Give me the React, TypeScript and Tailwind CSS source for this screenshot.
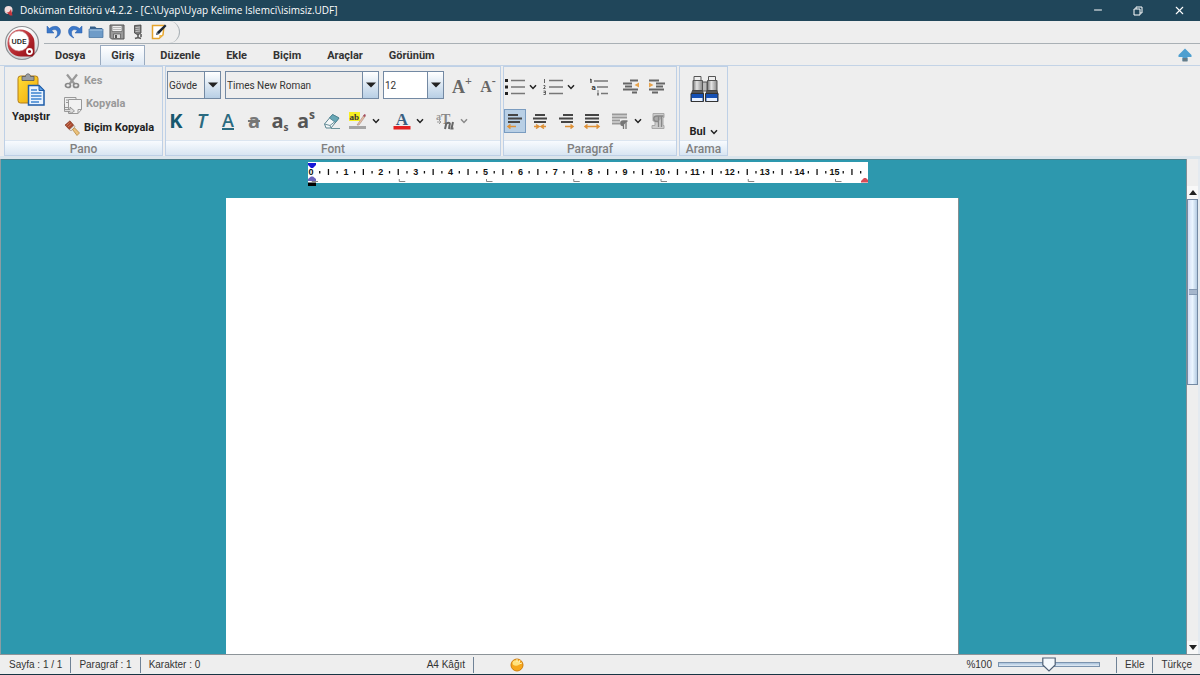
import { useState, type ReactNode } from "react";
import { Minus, X } from "lucide-react";
import clsx from "clsx";

const tabs = ["Dosya", "Giriş", "Düzenle", "Ekle", "Biçim", "Araçlar", "Görünüm"];

function Chevron({ muted = false }: { muted?: boolean }) {
  return (
    <svg viewBox="0 0 8 6" className={clsx("h-1.5 w-2", muted ? "text-[#8a8a8a]" : "text-[#222]")}>
      <path d="M1 1.2 4 4.4 7 1.2" fill="none" stroke="currentColor" strokeWidth="1.5" />
    </svg>
  );
}

function IconButton({ label, children, className }: { label: string; children: ReactNode; className?: string }) {
  return (
    <button type="button" aria-label={label} className={clsx("flex h-6 w-5 shrink-0 justify-center", className ?? "items-center")}>
      {children}
    </button>
  );
}

function SplitButton({ label, children, muted, className }: { label: string; children: ReactNode; muted?: boolean; className?: string }) {
  return (
    <button type="button" aria-label={label} className={clsx("flex h-6 shrink-0 items-center gap-1", className)}>
      <span className="flex w-5 items-center justify-center">{children}</span>
      <Chevron muted={muted} />
    </button>
  );
}

function Combo({ label, options, className, white }: { label: string; options: string[]; className: string; white?: boolean }) {
  return (
    <div className={clsx("relative h-7", className)}>
      <select
        aria-label={label}
        className={clsx(
          "h-full w-full appearance-none border border-[#7389a3] pr-4 pl-px text-[10px] text-[#333] outline-none",
          white ? "bg-white" : "bg-[#eeeeee]"
        )}
      >
        {options.map((o) => (
          <option key={o}>{o}</option>
        ))}
      </select>
      <span className="pointer-events-none absolute inset-y-px right-px flex w-4 items-center justify-center border-l border-[#7389a3] bg-linear-to-b from-white to-[#b8cfe5]">
        <svg viewBox="0 0 10 6" className="h-1.5 w-2.5">
          <path d="M0 .5h10L5 5.5z" fill="#222" />
        </svg>
      </span>
    </div>
  );
}

function Group({ title, children, className }: { title: string; children: ReactNode; className: string }) {
  return (
    <section aria-label={title} className={clsx("flex flex-col border border-[#bed0e6] bg-[#eeeeee]", className)}>
      <div className="h-[73px]">{children}</div>
      <h2 className="h-[15px] border-t border-[#dbe5f0] bg-linear-to-b from-[#f8fbfe] to-[#d9e6f2] text-center text-xs leading-4 font-medium text-[#808080]">
        {title}
      </h2>
    </section>
  );
}

function Logo() {
  return (
    <svg viewBox="0 0 36 36" className="size-9">
      <defs>
        <linearGradient id="ring" x1="0" y1="0" x2="0" y2="1">
          <stop offset="0" stopColor="#fff" />
          <stop offset="1" stopColor="#cbd0d4" />
        </linearGradient>
        <linearGradient id="red" x1="0" y1="0" x2="1" y2="1">
          <stop offset="0" stopColor="#d9656a" />
          <stop offset=".6" stopColor="#b3242b" />
          <stop offset="1" stopColor="#8e1118" />
        </linearGradient>
      </defs>
      <circle cx="18" cy="18" r="16.5" fill="url(#ring)" stroke="#8d9094" strokeWidth="1.2" />
      <path d="M16 4.500A12.500 13.500 0 0 0 3.500 18C3.500 26 9 31.500 17 31.500H28.500L30.500 29V18A14 13.500 0 0 0 16 4.500Z" fill="url(#red)" />
      <circle cx="15" cy="16" r="10" fill="#fff" stroke="#d4a6a8" strokeWidth=".6" />
      <circle cx="25.500" cy="26.500" r="2.500" fill="#8e1118" stroke="#fff" strokeWidth="1.800" />
      <text x="15" y="19" textAnchor="middle" fontSize="8" fill="#222" className="font-medium">UDE</text>
    </svg>
  );
}

function Undo({ flip = false }: { flip?: boolean }) {
  return (
    <svg viewBox="0 0 16 16" className={clsx("size-4", flip && "-scale-x-100")}>
      <path d="M1 2v7h7L5.700 6.500C9 4.500 11.500 6 11.500 9c0 2-1 3.500-2.500 5 4-1.500 5.500-4 5.500-6.500 0-5-6-7-11-3z" fill="#3b78c9" stroke="#2a5fab" strokeWidth=".5" />
    </svg>
  );
}

function QuickIcons() {
  return (
    <>
      <IconButton label="Geri al"><Undo /></IconButton>
      <IconButton label="Yinele"><Undo flip /></IconButton>
      <IconButton label="Aç">
        <svg viewBox="0 0 16 14" className="h-3.5 w-4">
          <path d="M2 1.500h5L8.500 3H14v9H2z" fill="#345e88" />
          <path d="M1 4h14v8.500H1z" fill="#6f9cc8" stroke="#3f6e9d" strokeWidth=".7" />
          <path d="M1.500 5h13" stroke="#a9c9e6" />
        </svg>
      </IconButton>
      <IconButton label="Kaydet">
        <svg viewBox="0 0 16 16" className="size-4">
          <path d="M1 1h14v14H2.500L1 13.500z" fill="#999" stroke="#555" />
          <path d="M3 1.500h10v6H3z" fill="#eee" stroke="#666" strokeWidth=".7" />
          <path d="M4.500 10h7v4.500h-7z" fill="#ddd" stroke="#555" strokeWidth=".7" />
          <path d="M6 11h2v3H6z" fill="#555" />
          <path d="M4 3.500h8M4 5.500h8" stroke="#aaa" strokeWidth=".8" />
        </svg>
      </IconButton>
      <IconButton label="İmzala">
        <svg viewBox="0 0 12 16" className="h-4 w-3">
          <path d="M2.500 1.500 9 1v8l-3 2-3.500-2z" fill="#777" stroke="#444" strokeWidth=".8" />
          <path d="M3.500 3.500 8 3M3.500 5.500 8 5M3.500 7.500 8 7" stroke="#ddd" strokeWidth=".8" />
          <path d="M6 10v4M3 14.500c2-1 4-1 6 0M9 10v3" stroke="#555" strokeWidth="1.500" fill="none" />
        </svg>
      </IconButton>
      <IconButton label="Düzenle">
        <svg viewBox="0 0 16 16" className="size-4">
          <path d="M1.500 1.500H13L12 11l-4 3.500H1.500z" fill="#fff" stroke="#e6a42c" strokeWidth="1.500" />
          <path d="M8 14.500 8.500 11H12z" fill="#f0b94b" />
          <path d="m5 11 1-3 8-7.500 1.500 1.500-7.500 8z" fill="#1c2736" />
          <path d="m5 11 1-3 2 2z" fill="#6a7787" />
        </svg>
      </IconButton>
    </>
  );
}

function PasteIcon() {
  return (
    <svg viewBox="0 0 30 34" className="h-[34px] w-[30px] shrink-0">
      <defs>
        <linearGradient id="board" x1="0" y1="0" x2="1" y2="1">
          <stop offset="0" stopColor="#ffdf35" />
          <stop offset="1" stopColor="#f0a80c" />
        </linearGradient>
      </defs>
      <rect x="2" y="3" width="20" height="27" rx="2.500" fill="url(#board)" stroke="#b37d18" />
      <path d="M6 7.500V3.500h3.500C9.500 0 14.500 0 14.500 3.500H18v4z" fill="#999da2" stroke="#555" strokeWidth=".8" />
      <path d="M12.500 12.500H23l5 5V32H12.500z" fill="#e9f3ff" stroke="#1c5ca9" strokeWidth="1.500" />
      <path d="M23 12.500v5h5z" fill="#5f9ee2" stroke="#1c5ca9" />
      <path d="M15 17h6M15 20h10.500M15 23h10.500M15 26h10.500M15 29h8" stroke="#3e84d0" strokeWidth="1.300" />
    </svg>
  );
}

function CutIcon() {
  return (
    <svg viewBox="0 0 16 16" className="size-4">
      <path d="M3 1.500 10.500 11M13 1.500 5.500 11" stroke="#999" strokeWidth="2.200" />
      <ellipse cx="4" cy="12.500" rx="2.500" ry="2" fill="none" stroke="#888" strokeWidth="1.700" />
      <ellipse cx="12" cy="12.500" rx="2.500" ry="2" fill="none" stroke="#888" strokeWidth="1.700" />
    </svg>
  );
}

function CopyIcon() {
  return (
    <svg viewBox="0 0 18 18" className="size-[18px]">
      <path d="M.5 1.500H12v10H.5z" fill="#eee" stroke="#999" />
      <path d="M4.500 3.500h13v10L14 17.500H4.500z" fill="#f2f2f2" stroke="#999" />
      <path d="M17.500 13.500H14v4M2 4h2M2 6.500h2" stroke="#999" fill="none" />
      <path d="M.5 8v5.500H6V11l4.500 4L6 18v-2.500H.5z" fill="#ddd" stroke="#888" strokeWidth=".8" />
    </svg>
  );
}

function BrushIcon() {
  return (
    <svg viewBox="0 0 16 16" className="size-4">
      <path d="M1 5 6 .8l4 4.700-4.500 4.300z" fill="#a8482f" stroke="#79301d" strokeWidth=".6" />
      <path d="m2.500 5.500 3.200-3M4 7l3.500-3" stroke="#d58a68" strokeWidth=".8" />
      <path d="m5.500 9.500 4.300-4 1.400 1.500L7 11z" fill="#e8e3da" stroke="#88796a" strokeWidth=".5" />
      <path d="m8.500 9.500 2-1.700L15.500 13l-2.500 2.500z" fill="#ecc27c" stroke="#ae7e35" strokeWidth=".7" />
    </svg>
  );
}

function EraserIcon() {
  return (
    <svg viewBox="0 0 18 18" className="size-[18px] shrink-0">
      <path d="M1.500 12 9.500 2.500l6.500 3.500L8 16H3z" fill="#f4f7f8" stroke="#5b8591" />
      <path d="m6.500 6 3-3.500L16 6l-3.500 4.500z" fill="#68a7b6" stroke="#477f8e" strokeWidth=".8" />
      <path d="M1.500 12 7 13.500l1 2.500M7 13.500l5-4M8 16.500h9" stroke="#6c929b" fill="none" />
    </svg>
  );
}

function HighlightIcon() {
  return (
    <svg viewBox="0 0 20 20" className="size-5">
      <path d="M1 1h11v9H1z" fill="#f7ef21" />
      <text x="1.500" y="9" fontSize="9" fill="#333" className="font-[Liberation_Serif] font-bold">ab</text>
      <path d="m9 14 7-10 1.500 1L11 14z" fill="#e8bda4" stroke="#a78a7a" strokeWidth=".6" />
      <path d="m15 5 1.500-2 1.500 1-1.500 2z" fill="#a54d60" />
      <path d="M1 15h17v3H1z" fill="#a5a5a5" />
    </svg>
  );
}

function FontColorIcon() {
  return (
    <svg viewBox="0 0 20 20" className="size-5 overflow-visible">
      <text x="10" y="13.500" textAnchor="middle" fontSize="17" fill="#3a5f82" className="font-[Liberation_Serif] font-bold">A</text>
      <path d="M1.500 15h17v3.500h-17z" fill="#e32020" />
    </svg>
  );
}

function TextEffectIcon() {
  return (
    <svg viewBox="0 0 20 20" className="size-5">
      <g className="font-[Liberation_Serif] font-bold">
        <text x="0" y="9" fontSize="10" fill="#999">a</text>
        <text x="5" y="13" fontSize="14" fill="#888">T</text>
      </g>
      <path d="M10.500 11.500 9 18M10.500 12.500c3-2 4 0 3 2L13 18M17 11l-1.500 6.500h2" fill="none" stroke="#666" strokeWidth="2" />
      <path d="M1 11h4M3 9l2 2-2 2" fill="none" stroke="#999" />
    </svg>
  );
}

// Bulleted and numbered lists share the same three rules
function ListIcon({ numbered = false }: { numbered?: boolean }) {
  return (
    <svg viewBox="0 0 20 16" className="h-4 w-5">
      <path d="M6 1.500h14M6 8h14M6 14.500h14" stroke="#777" strokeWidth="1.300" />
      {numbered ? (
        <path d="M1.500 0v4M.5 6.500h1.500V8L.5 9.500H2.500M.5 12h2v3.500h-2M.5 13.500h2" stroke="#555" strokeWidth=".9" fill="none" />
      ) : (
        <path d="M0 0h3v3H0zM0 6.500h3v3H0zM0 13h3v3H0z" fill="#222" />
      )}
    </svg>
  );
}

function MultiLevelIcon() {
  return (
    <svg viewBox="0 0 20 18" className="h-[18px] w-5">
      <path d="M5 3h14M8 9h11M12 15.500h7" stroke="#777" strokeWidth="1.300" />
      <path d="M2 1v4M1 1.500h1M9 12.500v1M9 14.500v3" stroke="#444" strokeWidth="1.300" />
      <text x="2.500" y="11.500" fontSize="8" fill="#333" className="font-bold">a</text>
    </svg>
  );
}

function IndentIcon({ out = false }: { out?: boolean }) {
  return (
    <svg viewBox="0 0 18 16" className="h-4 w-[18px]">
      <path
        d={out ? "M8 1.500h8M1 4.500h9M3 7.500h7M1 10.500h15M10 13.500h5" : "M1 1.500h10M8 4.500h9M8 7.500h7M1 10.500h15M4 13.500h6"}
        stroke="#666"
        strokeWidth="2"
      />
      <path d={out ? "M17 3.500v5L12.500 6z" : "M1 3.500v5L5.500 6z"} fill="#e8a44d" />
    </svg>
  );
}

const alignLines = {
  left: "M2 2h10M2 5.500h14M2 9h12",
  center: "M4 2h10M2 5.500h14M3 9h12",
  right: "M6 2h10M2 5.500h14M4 9h12",
  justify: "M2 2h14M2 5.500h14M2 9h14",
};

const alignArrows = {
  left: "M2 13.500h8M4.500 11.500 2 13.500l2.500 2",
  center: "M3 13.500h4M11 13.500h4M5 11.500l3 2-3 2M13 11.500l-3 2 3 2",
  right: "M8 13.500h8M13.500 11.500l2.500 2-2.500 2",
  justify: "M2 13.500h14M4.500 11.500 2 13.500l2.500 2M13.500 11.500l2.500 2-2.500 2",
};

function AlignIcon({ kind }: { kind: keyof typeof alignLines }) {
  return (
    <svg viewBox="0 0 18 16" className="h-4 w-[18px] shrink-0">
      <path d={alignLines[kind]} stroke="#454545" strokeWidth="2.200" />
      <path d={alignArrows[kind]} stroke="#df9136" strokeWidth="1.500" fill="none" />
    </svg>
  );
}

function SpacingIcon() {
  return (
    <svg viewBox="0 0 18 18" className="size-[18px]">
      <path d="M1 2.500h15M1 5.500h15M1 8.500h8M1 11.500h8" stroke="#999" strokeWidth="2" />
      <path d="M12.500 17V9M15 17V9M16.500 9H12a2 2 0 0 0 0 4.500" stroke="#777" strokeWidth="1.300" fill="#777" />
    </svg>
  );
}

function MarksIcon() {
  return (
    <svg viewBox="0 0 16 18" className="h-[18px] w-4">
      <path d="M3 1.500h11v4h-1v8h1v3H2v-3h3V9H3V5z" fill="#ccc" stroke="#a8a8a8" />
      <path d="M8.500 15V4M11.500 15V4M13.500 4H7a3 2.500 0 0 0 0 5.500h1.500" stroke="#888" strokeWidth="1.300" fill="#aaa" />
    </svg>
  );
}

function BinocularsIcon() {
  return (
    <svg viewBox="0 0 30 28" className="h-7 w-[30px]">
      <defs>
        <linearGradient id="tube">
          <stop offset="0" stopColor="#777" />
          <stop offset=".4" stopColor="#e4e4e4" />
          <stop offset="1" stopColor="#888" />
        </linearGradient>
      </defs>
      <path d="M12 7h6v9h-6z" fill="#bbb" stroke="#555" />
      {[1, 15.5].map((x) => (
        <g key={x} transform={`translate(${x} 0)`}>
          <path d="M4 1.500h7V6H4z" fill="#eee" stroke="#555" />
          <path d="M3 5.500h9.500V16H3z" fill="url(#tube)" stroke="#555" />
          <path d="M2.500 15.500h10l1 4H1.300z" fill="#555" stroke="#444" />
          <path d="M1 18.500h12.500v8H1z" fill="#1550b4" stroke="#333" />
          <path d="M2 23h10.500v3H2z" fill="#e8f1ff" />
        </g>
      ))}
    </svg>
  );
}

function Ruler() {
  const cm = 34.9;
  const ticks = Array.from({ length: 63 }, (_, i) => i + 1).filter((i) => i % 4 !== 0);
  return (
    <svg viewBox="0 0 560 24" className="h-6 w-full" role="img" aria-label="Cetvel">
      <path d="M0 0h560v21H0z" fill="#fff" />
      {ticks.map((i) => {
        const x = 3 + (i * cm) / 4;
        return (
          <path key={i} d={i % 4 === 2 ? `M${x} 7v6` : `M${x} 9v2.500`} stroke="#111" strokeWidth="1.300" />
        );
      })}
      {Array.from({ length: 16 }, (_, i) => (
        <text key={i} x={3 + i * cm} y="13" textAnchor="middle" fontSize="9" fill="#111" className="font-[Liberation_Sans] font-bold">
          {i}
        </text>
      ))}
      {Array.from({ length: 7 }, (_, i) => (
        <path key={i} d={`M${4 + i * 87.25} 17v2.500h6`} fill="none" stroke="#777" strokeWidth=".9" />
      ))}
      <path d="M0 1h8v2L5 6H3L0 3z" fill="#1616d8" />
      <path d="M0 19v-2l3-2.500h2L8 17v2z" fill="#6a62bd" />
      <path d="M0 20.500h8V24H0z" fill="#000" />
      <path d="M553 20.500V19l3-3h2l3 3v1.500z" fill="#d84a55" />
    </svg>
  );
}

function ScrollButton({ label, down = false }: { label: string; down?: boolean }) {
  return (
    <button type="button" aria-label={label} className="flex h-[13px] w-full shrink-0 items-center justify-center bg-[#f8f8f8]">
      <svg viewBox="0 0 8 5" className={clsx("h-[5px] w-2", down && "rotate-180")}>
        <path d="M0 5 4 0l4 5z" fill="#222" />
      </svg>
    </button>
  );
}

function ZoomSlider() {
  const [zoom, setZoom] = useState(100);
  return (
    <label className="flex items-center gap-1.5">
      <span>%{zoom}</span>
      <span className="relative flex w-[102px] items-center">
        <input
          type="range"
          aria-label="Yakınlaştırma"
          min={0}
          max={200}
          value={zoom}
          onChange={(e) => setZoom(Number(e.target.value))}
          className="h-[5px] w-full appearance-none border border-[#7b93ae] bg-linear-to-b from-[#a9c2dc] to-[#e3ecf5] [&::-webkit-slider-thumb]:size-3.5 [&::-webkit-slider-thumb]:appearance-none [&::-webkit-slider-thumb]:opacity-0"
        />
        <svg
          viewBox="0 0 14 15"
          className="pointer-events-none absolute h-[15px] w-3.5 -translate-x-1/2"
          style={{ left: `${zoom / 2}%` }}
        >
          <path d="M.8 1h12.400v7L7 14 .8 8z" fill="#f4f8fc" stroke="#4f6076" strokeWidth="1.200" />
        </svg>
      </span>
    </label>
  );
}

function TitleBar() {
  return (
    <div className="flex h-[21px] shrink-0 items-center bg-[#20465a] pl-1 text-white">
      <svg viewBox="0 0 10 12" className="h-3 w-2.5">
        <circle cx="4.500" cy="5" r="4" fill="#f3dede" />
        <path d="M1 6c2 3 5 1 6-2l1.500 6.500H6z" fill="#c6363c" />
      </svg>
      <h1 className="ml-1.5 font-['Open_Sans'] text-[10px]">Doküman Editörü v4.2.2 - [C:\Uyap\Uyap Kelime Islemci\isimsiz.UDF]</h1>
      <div className="ml-auto flex">
        <button type="button" aria-label="Simge durumuna küçült" className="flex w-10 justify-center">
          <Minus size={12} strokeWidth={2} />
        </button>
        <button type="button" aria-label="Önceki boyut" className="flex w-10 items-center justify-center">
          <svg viewBox="0 0 10 10" className="size-2.5">
            <path d="M1 3h6v6H1zM3 3V1h6v6H7" fill="none" stroke="#fff" />
          </svg>
        </button>
        <button type="button" aria-label="Kapat" className="flex w-[42px] justify-center">
          <X size={13} strokeWidth={2} />
        </button>
      </div>
    </div>
  );
}

function Ribbon() {
  return (
    <div className="flex shrink-0 gap-0.5 border-t border-[#c3d3e6] bg-[#eeeeee] px-1 pb-[3px] shadow-[inset_0_-3px_0_#dbe5ec]">
      <Group title="Pano" className="w-[159px]">
        <div className="flex h-full pl-[7px]">
          <button type="button" className="flex w-[38px] flex-col items-center pt-1.5 text-[11px] leading-5 font-bold text-[#222]">
            <PasteIcon />
            Yapıştır
          </button>
          <div className="ml-3.5 flex flex-col pt-0.5 text-[11px] font-bold">
            <button type="button" disabled className="flex h-6 items-center gap-1 text-[#999]">
              <CutIcon />
              Kes
            </button>
            <button type="button" disabled className="flex h-6 items-center gap-1 text-[#999]">
              <CopyIcon />
              Kopyala
            </button>
            <button type="button" className="flex h-6 items-center gap-1 whitespace-nowrap text-[#222]">
              <BrushIcon />
              Biçim Kopyala
            </button>
          </div>
        </div>
      </Group>

      <Group title="Font" className="w-[336px]">
        <div className="flex gap-1 pt-1 pl-px">
          <Combo label="Stil" options={["Gövde"]} className="w-[54px]" />
          <Combo label="Yazı tipi" options={["Times New Roman", "Arial"]} className="w-[154px]" />
          <Combo label="Yazı boyutu" options={["12", "14", "16"]} className="w-[61px]" white />
          <div className="ml-1 flex gap-1.5 self-center font-[Liberation_Serif] leading-5 text-[#666]">
            <IconButton label="Büyüt" className="items-start">
              <span className="text-lg leading-7 font-bold">A</span>
              <span className="text-xs leading-4 font-bold">+</span>
            </IconButton>
            <IconButton label="Küçült" className="items-start">
              <span className="text-base leading-7 font-bold">A</span>
              <span className="text-xs leading-4 font-bold">-</span>
            </IconButton>
          </div>
        </div>
        <div className="mt-2.5 flex items-center gap-1.5 font-['Open_Sans'] text-xl leading-5 text-[#2a6a80]">
          <IconButton label="Kalın"><b className="text-[#16586e]">K</b></IconButton>
          <IconButton label="İtalik"><i className="font-semibold">T</i></IconButton>
          <IconButton label="Altı çizili"><span className="border-b-2 border-[#2a6a80] text-lg leading-4 font-semibold">A</span></IconButton>
          <IconButton label="Üstü çizili"><s className="font-bold text-[#777]">a</s></IconButton>
          <IconButton label="Alt simge" className="items-start font-bold text-[#555]">
            <span className="leading-6">a</span>
            <span className="text-[10px] leading-9">s</span>
          </IconButton>
          <IconButton label="Üst simge" className="items-start font-bold text-[#555]">
            <span className="leading-6">a</span>
            <span className="text-xs leading-3">s</span>
          </IconButton>
          <IconButton label="Biçimi temizle"><EraserIcon /></IconButton>
          <SplitButton label="Vurgu rengi" className="mr-1.5"><HighlightIcon /></SplitButton>
          <SplitButton label="Yazı rengi" className="mr-1.5"><FontColorIcon /></SplitButton>
          <SplitButton label="Harf değiştir" muted><TextEffectIcon /></SplitButton>
        </div>
      </Group>

      <Group title="Paragraf" className="w-[174px]">
        <div className="flex items-center gap-1.5 pt-2 pl-px">
          <SplitButton label="Madde işaretleri"><ListIcon /></SplitButton>
          <SplitButton label="Numaralandırma"><ListIcon numbered /></SplitButton>
          <IconButton label="Çok düzeyli liste" className="ml-2 items-center"><MultiLevelIcon /></IconButton>
          <IconButton label="Girintiyi azalt" className="ml-1.5 items-center"><IndentIcon out /></IconButton>
          <IconButton label="Girintiyi artır"><IndentIcon /></IconButton>
        </div>
        <div className="mt-2.5 flex items-center gap-1">
          <button type="button" aria-label="Sola hizala" aria-pressed="true" className="flex h-6 w-[22px] shrink-0 items-center justify-center border border-[#7a9cc0] bg-[#b8cfe5]">
            <AlignIcon kind="left" />
          </button>
          <IconButton label="Ortala"><AlignIcon kind="center" /></IconButton>
          <IconButton label="Sağa hizala" className="ml-0.5 items-center"><AlignIcon kind="right" /></IconButton>
          <IconButton label="İki yana yasla" className="ml-0.5 items-center"><AlignIcon kind="justify" /></IconButton>
          <SplitButton label="Satır aralığı" className="ml-1"><SpacingIcon /></SplitButton>
          <IconButton label="Paragraf işaretleri" className="ml-0.5 items-center"><MarksIcon /></IconButton>
        </div>
      </Group>

      <Group title="Arama" className="w-[49px]">
        <button type="button" className="flex h-full w-full flex-col items-center justify-between pt-2 text-[11px] font-bold text-[#222]">
          <BinocularsIcon />
          <span className="flex items-center gap-1">
            Bul
            <Chevron />
          </span>
        </button>
      </Group>
    </div>
  );
}

function StatusBar() {
  return (
    <footer className="grid h-[21px] shrink-0 grid-cols-[39.5%_1fr_auto] items-center border-t border-b border-t-[#8d9499] border-b-[#173443] bg-[#eeeeee] font-['Liberation_Sans',sans-serif] text-[10px] text-[#333]">
      <div className="flex h-4 items-center border-r border-[#6f8296] pr-2 pl-[9px]">
        <span className="flex h-4 items-center border-r border-[#6f8296] pr-2">Sayfa : 1 / 1</span>
        <span className="flex h-4 items-center border-r border-[#6f8296] px-2">Paragraf : 1</span>
        <span className="pl-2">Karakter : 0</span>
        <span className="ml-auto">A4 Kâğıt</span>
      </div>
      <svg viewBox="0 0 14 14" className="ml-9 size-3.5">
        <circle cx="7" cy="7" r="6" fill="#f6a81c" stroke="#cf7d0c" />
        <ellipse cx="6" cy="5" rx="3.500" ry="2.800" fill="#ffe37d" />
        <path d="M7 1v3M10 2l-1 3M12 5l-3 1" stroke="#fff2b8" />
      </svg>
      <div className="flex h-4 items-center">
        <ZoomSlider />
        <span className="ml-4 flex h-4 items-center border-x border-[#6f8296] px-2">Ekle</span>
        <span className="px-2">Türkçe</span>
      </div>
    </footer>
  );
}

export default function App() {
  const [active, setActive] = useState("Giriş");

  return (
    <div className="flex h-screen flex-col overflow-hidden bg-[#eeeeee] font-[Roboto,sans-serif]">
      <TitleBar />
      <header className="flex h-11 shrink-0">
        <button type="button" aria-label="Uygulama menüsü" className="flex w-11 items-center justify-center">
          <Logo />
        </button>
        <div className="flex flex-1 flex-col">
          <div className="flex h-[23px] border-b border-[#a9b0b5]">
            <div className="flex items-center gap-px rounded-r-full border-r border-[#a9b0b5] pr-2.5">
              <QuickIcons />
            </div>
          </div>
          <nav className="flex flex-1 items-end gap-1 pr-2">
            {tabs.map((tab) => (
              <button
                key={tab}
                type="button"
                onClick={() => setActive(tab)}
                className={clsx(
                  "h-5 border border-b-0 px-2.5 pt-0.5 text-[11px] font-bold text-[#333]",
                  tab === active ? "border-[#9aabc0] bg-linear-to-b from-white to-[#dfe9f4]" : "border-transparent"
                )}
              >
                {tab}
              </button>
            ))}
            <button type="button" aria-label="Şeridi gizle" className="ml-auto self-center">
              <svg viewBox="0 0 14 14" className="size-3.5">
                <path d="M7 .5 13.500 7v2H9.500v4h-5V9H.5V7z" fill="#4e9fd0" />
                <path d="M4.500 10h5v3.500h-5z" fill="#667c88" />
              </svg>
            </button>
          </nav>
        </div>
      </header>
      <Ribbon />

      <main className="flex min-h-0 flex-1 border-l border-[#8b9da3] bg-[#2d98ae]">
        <div className="flex-1 overflow-hidden border-t border-[#4a7f8c] pr-0.5">
          <div className="mx-auto flex h-full w-[733px] flex-col pt-0.5">
            <div className="pr-[91px] pl-[82px]">
              <Ruler />
            </div>
            <div role="textbox" aria-label="Belge" contentEditable className="mt-3 flex-1 border-r border-[#848f92] bg-white outline-none" />
          </div>
        </div>
        <div className="flex w-3.5 flex-col border-r-2 border-l border-r-[#e4eaf0] border-l-[#7e8e96] bg-[#eeeeee]">
          <div className="h-[27px] shrink-0" />
          <ScrollButton label="Yukarı kaydır" />
          <div className="min-h-0 flex-1">
            <div className="flex h-[42%] items-center justify-center border border-[#7389a3] bg-linear-to-r from-[#d5def5] via-[#eaf5ff] to-[#b5cbe2]">
              <span className="h-1.5 w-2 border-y border-[#8599b3] bg-[#a5b6cc]" />
            </div>
          </div>
          <ScrollButton label="Aşağı kaydır" down />
        </div>
      </main>
      <StatusBar />
    </div>
  );
}
